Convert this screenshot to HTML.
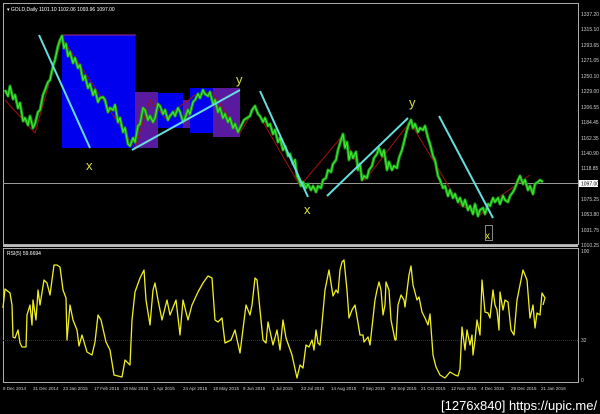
<!DOCTYPE html>
<html><head><meta charset="utf-8"><style>
html,body{margin:0;padding:0;background:#000;width:600px;height:414px;overflow:hidden}
svg{display:block;font-family:"Liberation Sans",sans-serif}
</style></head><body>
<svg width="600" height="414" viewBox="0 0 600 414" xmlns="http://www.w3.org/2000/svg">
<rect width="600" height="414" fill="#000"/>
<rect x="3.5" y="3.5" width="575" height="241" fill="none" stroke="#aaa" stroke-width="1"/>
<line x1="3" y1="246" x2="578" y2="246" stroke="#bbb" stroke-width="2"/>
<rect x="3.5" y="248.5" width="575" height="134" fill="none" stroke="#aaa" stroke-width="1"/>
<text x="7" y="11" fill="#fff" font-size="5">▾ GOLD,Daily  1101.10 1102.06 1093.96 1097.00</text>
<text x="7" y="255" fill="#fff" font-size="5">RSI(5) 59.6694</text>
<rect x="62" y="35" width="73" height="113" fill="#0000ee"/>
<line x1="62" y1="35" x2="136" y2="35" stroke="#a03080" stroke-width="1"/>
<rect x="135" y="92" width="23" height="56" fill="#5a1aa0"/>
<rect x="158" y="93" width="25" height="35" fill="#0000ee"/>
<rect x="183" y="100" width="7" height="28" fill="#5a1aa0"/>
<rect x="190" y="88" width="23" height="45" fill="#0000ee"/>
<rect x="213" y="88" width="27" height="49" fill="#5a1aa0"/>
<line x1="3" y1="183.5" x2="578" y2="183.5" stroke="#999" stroke-width="1"/>
<polyline fill="none" stroke="#a01010" stroke-width="1" points="5,100 35,133 62,38 135,148 150,100 165,118 195,95 212,92 240,133 255,108 300,186 343,135 365,180 410,122 460,205 480,215 495,200 530,175"/>
<polyline fill="none" stroke="#1a9a1a" stroke-width="3" stroke-linejoin="round" points="5,90 8,96 10,86 13,99 15,95 18,108 20,103 23,121 25,118 28,125 30,116 33,128 35,124 38,112 40,110 43,95 45,90 48,82 50,80 53,66 55,60 58,46 60,40 62,36 64,48 66,44 68,56 70,52 73,63 75,58 78,68 80,65 83,80 85,76 88,88 90,84 93,95 95,90 98,102 100,98 103,97 105,100 108,112 110,108 113,110 115,105 118,122 120,118 123,132 125,128 128,144 130,146 133,138 135,142 138,126 140,124 143,108 145,110 148,120 150,116 153,122 155,118 158,104 160,106 163,114 165,110 168,120 170,116 173,112 175,116 178,108 180,112 183,122 185,118 188,110 190,114 193,102 195,100 198,94 200,98 203,90 205,94 208,96 210,92 213,104 215,100 218,112 220,108 223,118 225,114 228,122 230,118 233,128 235,124 238,132 240,128 242,124 244,120 247,118 250,116 252,110 255,106 258,114 260,116 263,122 265,118 268,126 270,124 273,134 275,130 278,142 280,138 283,150 285,146 288,156 290,154 293,164 295,160 297,176 299,180 301,186 303,182 306,188 308,184 311,190 313,186 316,192 318,186 321,188 323,180 326,178 328,170 331,172 333,164 336,160 338,150 341,140 343,134 345,148 347,142 349,160 351,152 353,158 356,152 358,170 360,164 362,180 364,176 367,178 369,170 372,166 374,158 377,154 379,148 382,156 384,150 387,170 389,162 392,170 394,166 397,168 399,158 402,150 404,142 407,130 409,124 411,120 413,128 415,124 418,132 420,128 423,130 425,126 428,138 430,144 433,156 435,160 438,176 440,180 443,188 445,186 448,196 450,190 453,198 455,194 458,202 460,198 463,206 465,200 468,210 470,206 473,214 475,204 478,216 480,210 483,208 485,214 488,204 490,206 493,198 495,202 498,198 500,204 503,196 505,200 508,202 510,196 513,192 515,188 518,180 520,176 523,184 525,180 528,190 530,186 533,194 535,184 538,182 540,180 543,182"/>
<polyline fill="none" stroke="#44ee33" stroke-width="1" points="5,90 8,96 10,86 13,99 15,95 18,108 20,103 23,121 25,118 28,125 30,116 33,128 35,124 38,112 40,110 43,95 45,90 48,82 50,80 53,66 55,60 58,46 60,40 62,36 64,48 66,44 68,56 70,52 73,63 75,58 78,68 80,65 83,80 85,76 88,88 90,84 93,95 95,90 98,102 100,98 103,97 105,100 108,112 110,108 113,110 115,105 118,122 120,118 123,132 125,128 128,144 130,146 133,138 135,142 138,126 140,124 143,108 145,110 148,120 150,116 153,122 155,118 158,104 160,106 163,114 165,110 168,120 170,116 173,112 175,116 178,108 180,112 183,122 185,118 188,110 190,114 193,102 195,100 198,94 200,98 203,90 205,94 208,96 210,92 213,104 215,100 218,112 220,108 223,118 225,114 228,122 230,118 233,128 235,124 238,132 240,128 242,124 244,120 247,118 250,116 252,110 255,106 258,114 260,116 263,122 265,118 268,126 270,124 273,134 275,130 278,142 280,138 283,150 285,146 288,156 290,154 293,164 295,160 297,176 299,180 301,186 303,182 306,188 308,184 311,190 313,186 316,192 318,186 321,188 323,180 326,178 328,170 331,172 333,164 336,160 338,150 341,140 343,134 345,148 347,142 349,160 351,152 353,158 356,152 358,170 360,164 362,180 364,176 367,178 369,170 372,166 374,158 377,154 379,148 382,156 384,150 387,170 389,162 392,170 394,166 397,168 399,158 402,150 404,142 407,130 409,124 411,120 413,128 415,124 418,132 420,128 423,130 425,126 428,138 430,144 433,156 435,160 438,176 440,180 443,188 445,186 448,196 450,190 453,198 455,194 458,202 460,198 463,206 465,200 468,210 470,206 473,214 475,204 478,216 480,210 483,208 485,214 488,204 490,206 493,198 495,202 498,198 500,204 503,196 505,200 508,202 510,196 513,192 515,188 518,180 520,176 523,184 525,180 528,190 530,186 533,194 535,184 538,182 540,180 543,182"/>
<g stroke="#66dddd" stroke-width="2">
<line x1="39" y1="35" x2="90" y2="148"/>
<line x1="132" y1="150" x2="240" y2="90"/>
<line x1="260" y1="91" x2="308" y2="197"/>
<line x1="327" y1="196" x2="408" y2="118"/>
<line x1="439" y1="116" x2="493" y2="218"/>
</g>
<g fill="#dddd44" font-size="13">
<text x="86" y="170">x</text>
<text x="236" y="84">y</text>
<text x="304" y="214">x</text>
<text x="409" y="107">y</text>
<text x="485" y="239" font-size="10">x</text>
</g>
<rect x="485.5" y="225.5" width="7" height="15" fill="none" stroke="#888" stroke-width="1"/>
<g fill="#ccc" font-size="5">
<text x="581" y="16">1337.20</text><text x="581" y="31">1315.10</text><text x="581" y="47">1293.65</text>
<text x="581" y="62">1271.05</text><text x="581" y="78">1250.10</text><text x="581" y="93">1229.00</text>
<text x="581" y="109">1206.55</text><text x="581" y="124">1184.45</text><text x="581" y="140">1162.35</text>
<text x="581" y="155">1140.90</text><text x="581" y="170">1118.85</text>
<text x="581" y="201">1075.25</text><text x="581" y="216">1053.80</text><text x="581" y="232">1031.75</text>
<text x="581" y="247">1010.25</text><text x="581" y="253">100</text>
<text x="581" y="342">32</text><text x="581" y="382">0</text>
</g>
<rect x="579" y="180" width="19" height="7" fill="#fff"/>
<text x="581" y="185.5" fill="#000" font-size="5">1097.00</text>
<line x1="3" y1="340.5" x2="578" y2="340.5" stroke="#552222" stroke-width="1" stroke-dasharray="1 1"/>
<polyline fill="none" stroke="#eeee22" stroke-width="1.3" stroke-linejoin="round" points="3,308 5,289 10,293 12,305 13,337 15,338 18,330 20,343 22,347 26,347 27,315 30,305 32,325 33,300 36,320 38,290 40,305 44,280 47,283 50,295 54,265 57,265 60,267 63,290 66,298 67,340 70,305 73,320 77,330 79,346 82,335 87,352 92,355 95,342 98,315 101,320 106,342 110,350 114,375 118,376 122,377 125,360 130,365 132,320 135,292 140,278 144,270 146,300 150,325 153,290 155,283 158,300 162,320 167,300 170,315 176,300 180,335 183,300 188,320 192,305 198,292 203,283 208,276 212,278 215,320 218,322 222,318 225,343 231,340 235,330 240,353 246,305 250,315 252,305 255,278 257,280 260,310 263,340 266,343 268,322 273,345 277,330 280,350 283,320 286,338 292,355 297,378 300,365 303,368 306,345 309,347 312,340 314,350 316,330 318,343 320,345 325,290 329,270 333,296 336,290 338,293 340,270 342,262 344,260 347,290 349,318 352,310 355,305 358,323 360,335 363,335 364,342 368,337 370,345 375,300 377,290 379,282 381,290 383,315 385,305 386,282 389,290 391,320 395,340 396,340 398,305 401,295 404,300 405,307 409,275 411,266 413,285 417,300 419,297 422,312 425,318 428,325 430,314 433,355 436,367 440,375 445,378 450,372 455,375 458,376 460,369 462,327 465,350 467,330 470,345 472,335 473,355 475,340 477,320 480,335 482,280 485,312 488,313 490,318 493,290 495,305 497,310 499,330 500,292 503,310 505,300 508,302 511,330 514,335 517,300 520,285 523,270 527,280 530,318 533,305 535,328 537,313 540,315 542,293 545,298 543,305"/>
<g fill="#ccc" font-size="4.5">
<text x="3" y="390">8 Dec 2014</text><text x="33" y="390">31 Dec 2014</text><text x="63" y="390">23 Jan 2015</text>
<text x="94" y="390">17 Feb 2015</text><text x="123" y="390">10 Mar 2015</text><text x="153" y="390">1 Apr 2015</text>
<text x="183" y="390">24 Apr 2015</text><text x="213" y="390">18 May 2015</text><text x="243" y="390">9 Jun 2015</text>
<text x="272" y="390">1 Jul 2015</text><text x="301" y="390">23 Jul 2015</text><text x="331" y="390">14 Aug 2015</text>
<text x="362" y="390">7 Sep 2015</text><text x="391" y="390">29 Sep 2015</text><text x="421" y="390">21 Oct 2015</text>
<text x="451" y="390">12 Nov 2015</text><text x="481" y="390">4 Dec 2015</text><text x="511" y="390">29 Dec 2015</text>
<text x="541" y="390">21 Jan 2016</text>
</g>
<text x="441" y="410" fill="#fff" font-size="13">[1276x840] https://upic.me/</text>
</svg>
</body></html>
